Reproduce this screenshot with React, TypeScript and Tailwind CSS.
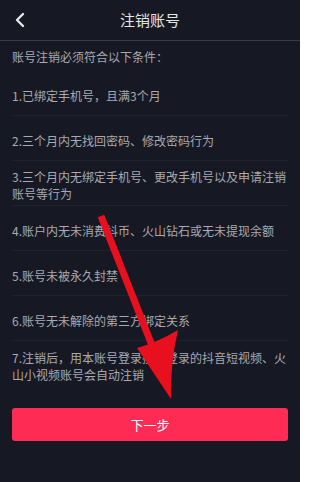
const rules = [
  "1.已绑定手机号，且满3个月",
  "2.三个月内无找回密码、修改密码行为",
  "3.三个月内无绑定手机号、更改手机号以及申请注销账号等行为",
  "4.账户内无未消费抖币、火山钻石或无未提现余额",
  "5.账号未被永久封禁",
  "6.账号无未解除的第三方绑定关系",
  "7.注销后，用本账号登录授权登录的抖音短视频、火山小视频账号会自动注销",
];

function BackIcon() {
  return (
    <svg width="12" height="16" viewBox="0 0 12 16" fill="none">
      <path d="M9 2 L3 8 L9 14" stroke="#e8e8ea" strokeWidth="2.4" strokeLinecap="round" strokeLinejoin="round" />
    </svg>
  );
}

// red annotation arrow drawn over the screenshot
function Arrow() {
  return (
    <svg className="absolute left-0 top-0 pointer-events-none" width="300" height="482" viewBox="0 0 300 482">
      <path d="M101 216 L153 348" stroke="#e8101e" strokeWidth="7" strokeLinecap="butt" />
      <path d="M137 348 Q158 342 178 330 Q170 364 171 399 Z" fill="#e8101e" />
    </svg>
  );
}

export default function App() {
  return (
    <div className="relative w-[300px] h-[482px] overflow-hidden bg-[#161823] font-['Noto_Sans_CJK_SC',sans-serif]">
      <div className="grid grid-cols-[44px_1fr_44px] items-center h-[41px] border-b border-[#3a3b47]">
        <div className="flex items-center pl-[14px]">
          <BackIcon />
        </div>
        <div className="text-center text-[15px] text-[#e6e6e8]">注销账号</div>
        <div />
      </div>

      <div className="h-[30px] flex items-center px-3 pt-[2px] text-[12px] text-[#a9aab0]">
        账号注销必须符合以下条件：
      </div>

      <div className="flex flex-col px-3">
        {rules.map((r, i) => (
          <div
            key={i}
            className={
              "h-[45px] flex items-center pt-[4px] text-[12px] leading-[17px] text-[#a9aab0] " +
              (i < rules.length - 1 ? "border-b border-[#1f212b]" : "")
            }
          >
            {r}
          </div>
        ))}
      </div>

      <div className="px-3 mt-[22px]">
        <div className="h-[33px] rounded-[3px] bg-[#fe2c55] flex items-center justify-center text-[13px] text-white">
          下一步
        </div>
      </div>

      <Arrow />
    </div>
  );
}
